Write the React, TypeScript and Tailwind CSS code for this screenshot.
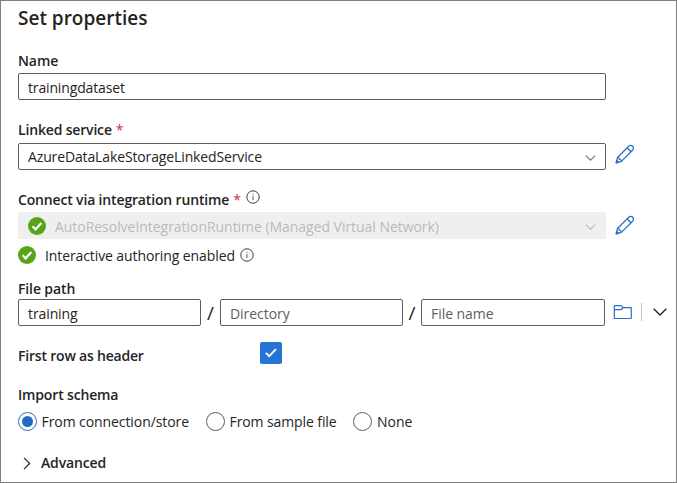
import type { ReactNode } from "react";

function Label({ children, className = "" }: { children: ReactNode; className?: string }) {
  return <div className={`whitespace-nowrap font-semibold leading-5 ${className}`}>{children}</div>;
}

function Required() {
  return <span className="ml-[4px] font-normal tracking-normal text-[#c8323a]">*</span>;
}

function Field({ children, className = "" }: { children: ReactNode; className?: string }) {
  return (
    <div className={`flex h-[27px] shrink-0 items-center whitespace-nowrap rounded-[2px] border border-[#605e5c] pl-[9px] leading-5 ${className}`}>
      {children}
    </div>
  );
}

function Chevron({ className = "" }: { className?: string }) {
  return (
    <svg viewBox="0 0 12 7" fill="none" stroke="currentColor" strokeWidth="1.2" className={`shrink-0 ${className}`}>
      <path d="M0.5 0.6 6 6.1 11.5 0.6" />
    </svg>
  );
}

function Pencil() {
  return (
    <svg width="20" height="20" viewBox="0 0 20 20" fill="none" stroke="#2b6fc4" strokeWidth="1.25" strokeLinejoin="round" className="shrink-0">
      <path d="M1.2 18.8 2.5 13.5 13.7 2.3a2.75 2.75 0 0 1 3.9 3.9L6.4 17.4Z" />
      <path d="M2.5 13.5c1.2-.1 1.9.5 1.8 1.9 1.4-.1 2.1.6 2.1 2M12.2 3.8l3.9 3.9" />
      <path d="m1.2 18.8.6-2.3 1.7 1.7Z" fill="#2b6fc4" />
    </svg>
  );
}

function Passed() {
  return (
    <svg width="18" height="18" viewBox="0 0 18 18" className="shrink-0">
      <circle cx="9" cy="9" r="9" fill="#57a31a" />
      <path d="m4.6 9.3 3 3 5.8-6.4" fill="none" stroke="#fff" strokeWidth="2.2" />
    </svg>
  );
}

function Info() {
  return (
    <svg width="14" height="14" viewBox="0 0 14 14" className="shrink-0">
      <circle cx="7" cy="7" r="6.2" fill="none" stroke="#3b3a39" strokeWidth="1" />
      <path d="M7 6v4.2M7 3.8v1.1" stroke="#605e5c" strokeWidth="1" />
    </svg>
  );
}

function Radio({ checked = false }: { checked?: boolean }) {
  return (
    <span className={`flex size-[19px] shrink-0 items-center justify-center rounded-full border ${checked ? "border-[#2070cc]" : "border-[#605e5c]"}`}>
      {checked && <span className="size-[11px] rounded-full bg-[#226cc2]" />}
    </span>
  );
}

export default function App() {
  return (
    <div className="h-[483px] w-[677px] overflow-hidden border border-[#7f7f7f] bg-white pl-[17px] font-['Open_Sans','Noto_Sans',sans-serif] text-[14px] text-[#252423]">
      <h1 className="mt-[3px] h-[28px] text-[19px] font-semibold leading-[28px]">Set properties</h1>

      <Label className="mt-[19px] tracking-[-0.1px]">Name</Label>
      <Field className="mt-[2px] w-[588px] pt-[3px] tracking-[-0.15px]">trainingdataset</Field>

      <Label className="mt-[20px] tracking-[-0.17px]">
        Linked service
        <Required />
      </Label>
      <div className="mt-[3px] flex gap-[9px]">
        <Field className="w-[588px] justify-between pr-[9px] pt-px tracking-[-0.13px]">
          AzureDataLakeStorageLinkedService
          <Chevron className="mt-px h-[6px] w-[11px] text-[#8c6a5e]" />
        </Field>
        <span className="pt-px">
          <Pencil />
        </span>
      </div>

      <div className="mt-[19px] flex h-[20px]">
        <Label className="pt-px tracking-[-0.16px]">
          Connect via integration runtime
          <Required />
        </Label>
        <span className="ml-[5px] pt-px">
          <Info />
        </span>
      </div>
      <div className="mt-[3px] flex gap-[9px]">
        <div className="flex h-[27px] w-[588px] items-center rounded-[2px] bg-[#efefef] pl-[10px] pr-[10px] text-[#bcbab8]">
          <Passed />
          <span className="ml-[9px] flex-1 pt-[2px] leading-5 tracking-[-0.04px]">AutoResolveIntegrationRuntime (Managed Virtual Network)</span>
          <Chevron className="mt-[3px] h-[6px] w-[11px]" />
        </div>
        <span className="pt-[3px]">
          <Pencil />
        </span>
      </div>
      <div className="mt-[6px] flex h-[20px] items-center">
        <Passed />
        <span className="ml-[9px] pt-px leading-5 tracking-[-0.1px]">Interactive authoring enabled</span>
        <span className="ml-[5px]">
          <Info />
        </span>
      </div>

      <Label className="mt-[14px] tracking-[-0.12px]">File path</Label>
      <div className="flex">
        <Field className="w-[183px] pt-[3px] tracking-[-0.1px]">training</Field>
        <span className="w-[19px] text-center text-[19px] leading-[28px]">/</span>
        <Field className="w-[183px] pt-[3px] tracking-[-0.05px] text-[#605e5c]">Directory</Field>
        <span className="w-[18px] text-center text-[19px] leading-[28px]">/</span>
        <Field className="w-[184px] pt-[3px] tracking-[-0.05px] text-[#605e5c]">File name</Field>
        <svg width="19" height="15" viewBox="0 0 19 15" fill="none" stroke="#2b6fc4" strokeWidth="1.2" strokeLinejoin="round" className="ml-[8px] mt-[6px] shrink-0">
          <path d="M1.3 13.5V1.2q0-.5.5-.5h5.5q2 0 2.3 2h8.2q.5 0 .5.5v9.8q0 .5-.5.5ZM1.3 4.7H7.6q1.7 0 2-2" />
        </svg>
        <span className="ml-[9px] mt-[4px] h-[18px] w-px bg-[#c8c6c4]" />
        <Chevron className="ml-[11px] mt-[9px] h-[8px] w-[14px] text-[#252423]" />
      </div>

      <div className="mt-[15px] flex h-[22px]">
        <Label className="w-[242px] pt-[4px] tracking-[-0.2px]">First row as header</Label>
        <span className="flex size-[22px] items-center justify-center rounded-[2px] bg-[#2374d3]">
          <svg width="12" height="10" viewBox="0 0 12 10" fill="none" stroke="#fff" strokeWidth="1.8">
            <path d="m1 4.8 3.2 3.3L11 1.2" />
          </svg>
        </span>
      </div>

      <Label className="mt-[21px] tracking-[-0.16px]">Import schema</Label>
      <div className="mt-[7px] flex h-[19px] items-center whitespace-nowrap">
        <Radio checked />
        <span className="ml-[4.5px] w-[164.5px] tracking-[-0.08px]">From connection/store</span>
        <Radio />
        <span className="ml-[4.5px] w-[123.5px] tracking-[-0.1px]">From sample file</span>
        <Radio />
        <span className="ml-[5px]">None</span>
      </div>

      <div className="mt-[22px] flex h-[20px] items-center">
        <svg width="8" height="13" viewBox="0 0 8 13" fill="none" stroke="#252423" strokeWidth="1.2" className="ml-[5px]">
          <path d="m1 .8 5.7 5.7L1 12.2" />
        </svg>
        <Label className="ml-[10px] tracking-[-0.15px]">Advanced</Label>
      </div>
    </div>
  );
}
